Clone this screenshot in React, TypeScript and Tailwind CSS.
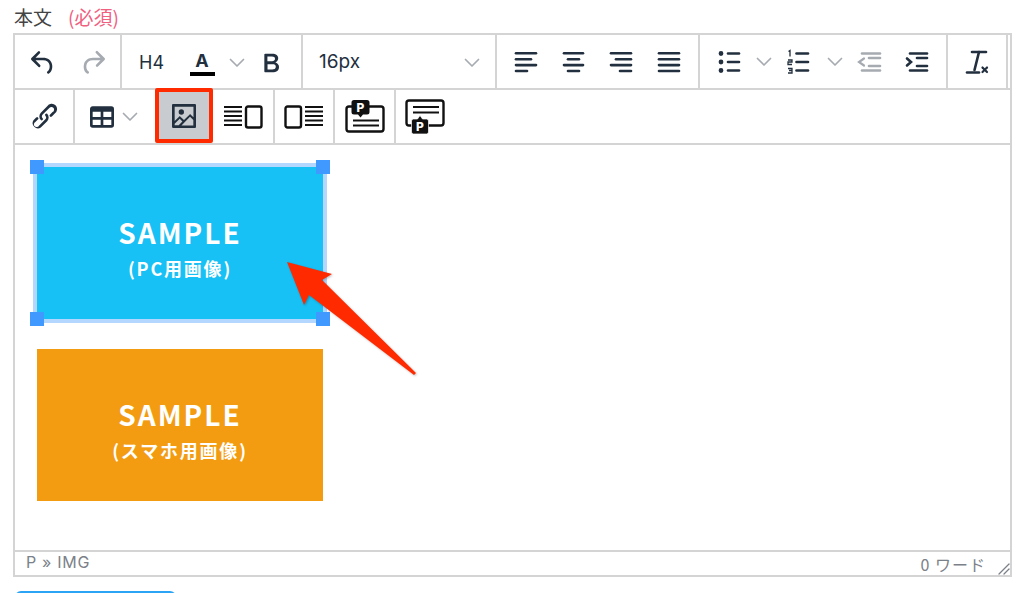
import type { ReactNode } from 'react';

const UI = "font-['Inter','Liberation_Sans',sans-serif]";
const JP = "font-['Noto_Sans_CJK_JP',sans-serif]";

function Icon({ d, off = false }: { d: string; off?: boolean }) {
  return (
    <svg viewBox="0 0 24 24" className={`w-8 h-8 ${off ? 'fill-[#a6abb1]' : 'fill-[#222f3e]'}`}>
      <path d={d} />
    </svg>
  );
}

function Chevron({ className = '' }: { className?: string }) {
  return (
    <svg viewBox="0 0 16 10" className={`w-4 h-[10px] ${className}`} fill="none" stroke="#a6abb1" strokeWidth="1.7" strokeLinecap="round" strokeLinejoin="round">
      <polyline points="1.5,1.5 8,8 14.5,1.5" />
    </svg>
  );
}

// rows of rounded bars, used for align icons
function Bars({ rows }: { rows: [number, number, number][] }) {
  return (
    <svg viewBox="0 0 32 32" className="w-8 h-8" stroke="#222f3e" strokeWidth="2.6" strokeLinecap="round">
      {rows.map(([x1, x2, y]) => (
        <line key={`${x1}-${y}`} x1={x1} x2={x2} y1={y} y2={y} />
      ))}
    </svg>
  );
}

function UndoGroup() {
  return (
    <div className="flex items-center pl-[3px] pt-[2px] w-[107px] border-r-2 border-[#d4d4d4]">
      <div className="w-[50px] flex justify-center">
        <Icon d="M6.4 8H12c3.7 0 6.2 2 6.8 5.1.6 2.7-.4 5.6-2.3 6.8a1 1 0 0 1-1-1.8c1.1-.6 1.8-2.7 1.4-4.6-.5-2.1-2.1-3.5-4.9-3.5H6.4l3.3 3.3a1 1 0 1 1-1.4 1.4l-5-5a1 1 0 0 1 0-1.4l5-5a1 1 0 0 1 1.4 1.4L6.4 8z" />
      </div>
      <div className="w-[50px] flex justify-center">
        <Icon off d="M17.6 10H12c-2.8 0-4.4 1.4-4.9 3.5-.4 2 .3 4 1.4 4.6a1 1 0 1 1-1 1.8c-2-1.2-2.9-4.1-2.3-6.8.6-3 3-5.1 6.8-5.1h5.6l-3.3-3.3a1 1 0 1 1 1.4-1.4l5 5a1 1 0 0 1 0 1.4l-5 5a1 1 0 0 1-1.4-1.4l3.3-3.3z" />
      </div>
    </div>
  );
}

function FormatGroup() {
  return (
    <div className="flex items-center w-[181px] pl-[17px] pt-[2px] border-r-2 border-[#d4d4d4]">
      <span className="text-[18px] text-[#222f3e] w-[42px]">H4</span>
      <div className="w-[42px] flex flex-col items-center">
        <span className="text-[18px] font-bold leading-[22px] text-[#222f3e]">A</span>
        <div className="w-[25px] h-[4px] bg-black" />
      </div>
      <Chevron className="ml-[6px]" />
      <div className="ml-[10px]">
        <svg viewBox="0 0 24 24" className="w-8 h-8 fill-[#222f3e]">
          <path d="M7.8 19c-.3 0-.5 0-.6-.2l-.2-.5V5.7c0-.2 0-.4.2-.5l.6-.2h5c1.5 0 2.7.3 3.5 1 .7.6 1.1 1.4 1.1 2.5a3 3 0 0 1-.6 1.9c-.4.6-1 1-1.6 1.2.4.1.9.3 1.3.6s.8.7 1 1.2c.4.4.5 1 .5 1.6 0 1.3-.4 2.3-1.3 3-.8.7-2.1 1-3.8 1H7.8zm5-8.3c.6 0 1.2-.1 1.6-.5.4-.3.6-.7.6-1.3 0-1.1-.8-1.7-2.3-1.7H9.3v3.5h3.4zm.5 6c.7 0 1.3-.1 1.7-.4.4-.4.6-.9.6-1.5s-.2-1-.7-1.4c-.4-.3-1-.4-2-.4H9.4v3.8h4z" />
        </svg>
      </div>
    </div>
  );
}

function SizeGroup() {
  return (
    <div className="flex items-center justify-between w-[194px] pl-[16px] pr-[15px] pt-[2px] border-r-2 border-[#d4d4d4]">
      <span className="text-[19px] text-[#222f3e]">16px</span>
      <Chevron />
    </div>
  );
}

function AlignGroup() {
  const sets: [number, number, number][][] = [
    [[6, 26, 7.3], [6, 21, 13.2], [6, 26, 19.1], [6, 17, 25]],
    [[6, 25, 7.3], [10, 21, 13.2], [6, 25, 19.1], [10, 21, 25]],
    [[5, 25, 7.3], [10, 25, 13.2], [5, 25, 19.1], [14, 25, 25]],
    [[5, 25, 7.3], [5, 25, 13.2], [5, 25, 19.1], [5, 25, 25]],
  ];
  return (
    <div className="flex items-center w-[203px] pl-[5px] border-r-2 border-[#d4d4d4]">
      {sets.map((rows, i) => (
        <div key={i} className="w-[48px] flex justify-center">
          <Bars rows={rows} />
        </div>
      ))}
    </div>
  );
}

function ListGroup() {
  return (
    <div className="flex items-center w-[248px] border-r-2 border-[#d4d4d4]">
      <div className="w-[32px] ml-[13px]">
        <svg viewBox="0 0 32 32" className="w-8 h-8" stroke="#222f3e" strokeWidth="2.6" strokeLinecap="round" fill="#222f3e">
          <line x1="15" x2="26" y1="7.500" y2="7.500" />
          <line x1="15" x2="26" y1="16" y2="16" />
          <line x1="15" x2="26" y1="24.500" y2="24.500" />
          <circle cx="8" cy="7.500" r="1.100" />
          <circle cx="8" cy="16" r="1.100" />
          <circle cx="8" cy="24.500" r="1.100" />
        </svg>
      </div>
      <Chevron className="ml-[11px]" />
      <div className="w-[32px] ml-[9px]">
        <svg viewBox="0 0 32 32" className="w-8 h-8" stroke="#222f3e" strokeWidth="2.6" strokeLinecap="round" fill="none">
          <line x1="15.500" x2="27" y1="7.500" y2="7.500" />
          <line x1="15.500" x2="27" y1="16" y2="16" />
          <line x1="15.500" x2="27" y1="24.500" y2="24.500" />
          <path d="M7.500 5.500 9 4.500v6M7 14h4v2H7v2.500h4M7 22.500h4v2H8h3V27H7" strokeWidth="1.300" strokeLinecap="butt" />
        </svg>
      </div>
      <Chevron className="ml-[14px]" />
      <div className="w-[32px] ml-[10px]">
        <svg viewBox="0 0 32 32" className="w-8 h-8" stroke="#a6abb1" strokeWidth="2.600" strokeLinecap="round" fill="none">
          <line x1="9" x2="27" y1="7.500" y2="7.500" />
          <line x1="16" x2="27" y1="12" y2="12" />
          <line x1="16" x2="27" y1="20" y2="20" />
          <line x1="9" x2="27" y1="24.500" y2="24.500" />
          <polyline points="11,12.500 6,16 11,19.500" strokeWidth="2.200" />
        </svg>
      </div>
      <div className="w-[32px] ml-[16px]">
        <svg viewBox="0 0 32 32" className="w-8 h-8" stroke="#222f3e" strokeWidth="2.600" strokeLinecap="round" fill="none">
          <line x1="9" x2="26" y1="7.500" y2="7.500" />
          <line x1="16" x2="26" y1="12" y2="12" />
          <line x1="16" x2="26" y1="20" y2="20" />
          <line x1="9" x2="26" y1="24.500" y2="24.500" />
          <polyline points="6,12.500 10,16 6,19.500" strokeWidth="2.600" />
        </svg>
      </div>
    </div>
  );
}

function ClearFormat() {
  return (
    <div className="flex items-center justify-center w-[60px] border-r-2 border-[#d4d4d4]">
      <svg viewBox="0 0 32 32" className="w-8 h-8" stroke="#222f3e" fill="none" strokeLinecap="round">
        <line x1="11" x2="25" y1="6" y2="6" strokeWidth="2.600" />
        <line x1="18" x2="13.500" y1="6" y2="24" strokeWidth="2.600" />
        <line x1="6" x2="18" y1="26.500" y2="26.500" strokeWidth="2.600" />
        <line x1="21.500" x2="26" y1="21.500" y2="26" strokeWidth="2.200" />
        <line x1="26" x2="21.500" y1="21.500" y2="26" strokeWidth="2.200" />
      </svg>
    </div>
  );
}

function Cell({ width, children }: { width: string; children: ReactNode }) {
  return <div className={`flex items-center justify-center border-r-2 border-[#d4d4d4] ${width}`}>{children}</div>;
}

function ImageTool() {
  return (
    <div className="relative w-[58px] flex items-center justify-center">
      <div className="absolute -top-[2px] bottom-0 left-0 right-0 bg-[#c8cbcf] border-[4px] border-[#ff2a00] rounded-[2px]" />
      <svg viewBox="0 0 24 24" className="relative -mt-[2px] w-8 h-8 fill-[#222f3e]">
        <path d="M5 15.700l3.300-3.200c.3-.3.7-.3 1 0L12 15l4.100-4c.3-.4.8-.4 1 0l2 1.900V5H5v10.700zM5 18V19h3l2.800-2.900-2-2L5 17.900zm14-3l-2.500-2.400-6.400 6.500H19v-4zM4 3h16c.6 0 1 .4 1 1v16c0 .6-.4 1-1 1H4a1 1 0 0 1-1-1V4c0-.6.4-1 1-1zm6 8a2 2 0 1 0 0-4 2 2 0 0 0 0 4z" />
      </svg>
    </div>
  );
}

function TextLeftIcon() {
  return (
    <svg viewBox="0 0 40 24" className="w-10 h-6" fill="none" stroke="#111" strokeWidth="2">
      {[2, 6.500, 11, 15.500, 20].map((y) => (
        <line key={y} x1="1" x2="19" y1={y} y2={y} />
      ))}
      <rect x="23" y="1.500" width="15.500" height="21" rx="2" strokeWidth="2.400" />
    </svg>
  );
}

function TextRightIcon() {
  return (
    <svg viewBox="0 0 40 24" className="w-10 h-6" fill="none" stroke="#111" strokeWidth="2">
      <rect x="1.500" y="1.500" width="15.500" height="21" rx="2" strokeWidth="2.400" />
      {[2, 6.500, 11, 15.500, 20].map((y) => (
        <line key={y} x1="21" x2="39" y1={y} y2={y} />
      ))}
    </svg>
  );
}

function PinTopIcon() {
  return (
    <svg viewBox="0 0 40 34" className="w-10 h-[34px]">
      <rect x="1.500" y="6.500" width="37" height="25" rx="2.500" fill="none" stroke="#111" strokeWidth="2.400" />
      <path d="M9 0h13a2.500 2.500 0 0 1 2.500 2.500v9.500a2.500 2.500 0 0 1-2.500 2.500h-4l-2.500 3-2.500-3H9a2.500 2.500 0 0 1-2.500-2.500V2.500A2.500 2.500 0 0 1 9 0z" fill="#111" />
      <text x="15.500" y="12" textAnchor="middle" fontSize="12" fontWeight="800" fill="#fff" fontFamily="Inter, sans-serif">P</text>
      <line x1="8" x2="34" y1="20.500" y2="20.500" stroke="#111" strokeWidth="2" />
      <line x1="8" x2="34" y1="25.500" y2="25.500" stroke="#111" strokeWidth="2" />
    </svg>
  );
}

function PinBottomIcon() {
  return (
    <svg viewBox="0 0 40 36" className="w-10 h-9">
      <rect x="1.500" y="1.500" width="37" height="25" rx="2.500" fill="none" stroke="#111" strokeWidth="2.400" />
      <line x1="8" x2="34" y1="8" y2="8" stroke="#111" strokeWidth="2" />
      <line x1="8" x2="34" y1="13.500" y2="13.500" stroke="#111" strokeWidth="2" />
      <path d="M8.500 20h4l2.500-3.500 2.500 3.500h4a2 2 0 0 1 2 2v11a2 2 0 0 1-2 2h-13a2 2 0 0 1-2-2V22a2 2 0 0 1 2-2z" fill="#111" stroke="#fff" strokeWidth="0.700" />
      <text x="15" y="32" textAnchor="middle" fontSize="12" fontWeight="800" fill="#fff" fontFamily="Inter, sans-serif">P</text>
    </svg>
  );
}

function Handle({ pos }: { pos: string }) {
  return <div className={`absolute w-[14px] h-[14px] bg-[#4099ff] ${pos}`} />;
}

function Sample({ bg, sub }: { bg: string; sub: string }) {
  return (
    <div className={`w-[286px] h-[152px] pt-[10px] flex flex-col items-center justify-center text-white ${JP} ${bg}`}>
      <span className="text-[28px] leading-[36px] font-bold tracking-[2px] mb-[4px]">SAMPLE</span>
      <span className="text-[18px] leading-[28px] font-bold tracking-[1.8px]">{sub}</span>
    </div>
  );
}

export default function App() {
  return (
    <div className={`relative h-[593px] overflow-hidden bg-white pl-[13px] pr-[12px] ${UI}`}>
      {/* Label */}
      <div className={`h-[33px] flex items-center gap-4 text-[19px] pt-[1px] pl-[1px] text-[#444444] ${JP}`}>
        <span>本文</span>
        <span className="text-[#f0607f]">(必須)</span>
      </div>

      {/* Editor */}
      <div className="h-[544px] flex flex-col border-2 border-[#d4d4d4]">
        <div className="h-[55px] flex shrink-0 border-b-2 border-[#d4d4d4]">
          <UndoGroup />
          <FormatGroup />
          <SizeGroup />
          <AlignGroup />
          <ListGroup />
          <ClearFormat />
        </div>
        <div className="h-[55px] flex shrink-0 border-b-2 border-[#d4d4d4]">
          <Cell width="w-[60px]">
            <svg viewBox="0 0 24 24" className="w-8 h-8 fill-[#222f3e]">
              <path d="M6.200 12.300a1 1 0 0 1 1.400 1.400l-2.100 2.100a2 2 0 1 0 2.700 2.700l4.800-4.800a2 2 0 0 0 0-2.700 1 1 0 0 1 1.400-1.400 4 4 0 0 1 0 5.500l-4.800 4.800a4 4 0 0 1-5.500-5.500l2-2.100zm11.600-.6a1 1 0 0 1-1.400-1.400l2-2a2 2 0 1 0-2.600-2.800L11 10.200a2 2 0 0 0 0 2.700 1 1 0 0 1-1.400 1.400 4 4 0 0 1 0-5.500l4.800-4.800a4 4 0 1 1 5.500 5.500l-2 2.100z" />
            </svg>
          </Cell>
          <div className="w-[80px] flex items-center pl-[11px]">
            <svg viewBox="0 0 24 24" className="w-8 h-8 fill-[#222f3e]">
              <path d="M19 4a2 2 0 0 1 2 2v12a2 2 0 0 1-2 2H5a2 2 0 0 1-2-2V6c0-1.100.9-2 2-2h14zM5 14v4h6v-4H5zm14 0h-6v4h6v-4zm0-6h-6v4h6V8zM5 12h6V8H5v4z" />
            </svg>
            <Chevron className="ml-[4px]" />
          </div>
          <ImageTool />
          <Cell width="w-[62px]">
            <TextLeftIcon />
          </Cell>
          <Cell width="w-[60px]">
            <TextRightIcon />
          </Cell>
          <Cell width="w-[61px]">
            <PinTopIcon />
          </Cell>
          <div className="w-[58px] flex items-center justify-center">
            <PinBottomIcon />
          </div>
        </div>

        {/* Content */}
        <div className="flex-1 pl-[22px] pt-[22px]">
          <div className="relative w-[286px] outline-4 outline-[#b4d7ff]">
            <Sample bg="bg-[#17c0f5]" sub="(PC用画像)" />
            <Handle pos="-left-[7px] -top-[7px]" />
            <Handle pos="-right-[7px] -top-[7px]" />
            <Handle pos="-left-[7px] -bottom-[7px]" />
            <Handle pos="-right-[7px] -bottom-[7px]" />
          </div>
          <div className="mt-[30px]">
            <Sample bg="bg-[#f39c12]" sub="(スマホ用画像)" />
          </div>
        </div>

        {/* Status bar */}
        <div className="relative h-[25px] shrink-0 flex items-center justify-between border-t-2 border-[#d4d4d4] pl-[11px] pr-[24px] text-[16px] tracking-[0.7px] text-[#7b8188]">
          <span className="-mt-[3px]">P » IMG</span>
          <span className={`tracking-[1px] ${JP}`}>0 ワード</span>
          <svg viewBox="0 0 12 12" className="absolute right-0 bottom-0 w-3 h-3" stroke="#7b8188" strokeWidth="1.300" strokeLinecap="round">
            <line x1="1" y1="11" x2="11" y2="1" />
            <line x1="6" y1="11" x2="11" y2="6" />
          </svg>
        </div>
      </div>

      {/* Submit button, cut off by the window */}
      <div className="w-[161px] h-[30px] mt-[14px] ml-[2px] rounded-[6px] bg-[#2ca4f5]" />

      {/* Annotation arrow */}
      <svg viewBox="0 0 1024 593" className="absolute inset-0 w-[1024px] h-[593px] pointer-events-none drop-shadow-[1px_1px_1px_rgba(0,0,0,0.25)]">
        <polygon points="287,262 332,274 322,280 416,373 414,375 309,295 304,305" fill="#ff2a00" />
      </svg>
    </div>
  );
}
